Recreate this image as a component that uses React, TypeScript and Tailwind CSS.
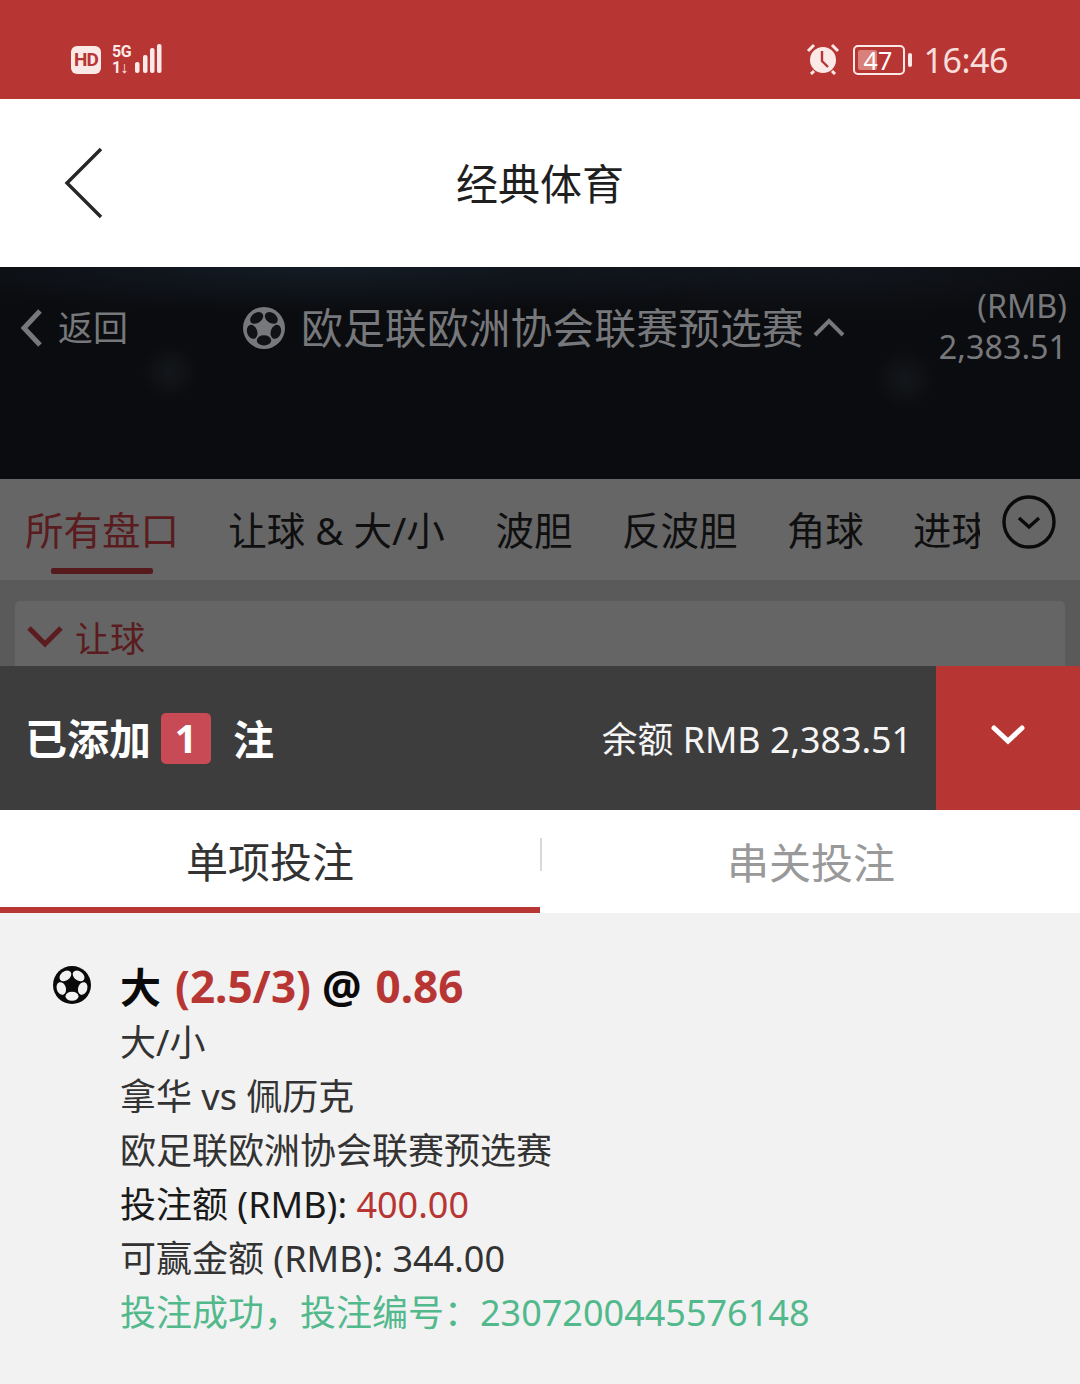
const tabs = ['波胆', '反波胆', '角球', '进球'];

function Ball({ size, disc, patch }: { size: number; disc: string; patch: string }) {
  return (
    <svg width={size} height={size} viewBox="0 0 24 24" className="shrink-0">
      <circle cx="12" cy="12" r="12" fill={disc} />
      {[36, 108, 180, 252, 324].map((a) => (
        <ellipse key={a} cx="12" cy="4.9" rx="4.1" ry="2.9" fill={patch} transform={`rotate(${a} 12 12)`} />
      ))}
    </svg>
  );
}

function StatusBar() {
  return (
    <div className="h-[99px] bg-[#b73634] flex items-center justify-between pl-[71px] pr-[72px] pt-[21px] text-[#fbe9e7]">
      <div className="flex items-center">
        <div className="w-[30px] h-[28px] rounded-[6px] bg-[#fbe9e7] text-[#b73634] text-[19px] leading-[28px] font-bold text-center tracking-[-1px] font-['Roboto',sans-serif]">
          HD
        </div>
        <div className="ml-[11px] flex flex-col w-[17px] text-[16px] leading-[16px] font-bold font-['Roboto',sans-serif]">
          <span className="tracking-[-0.5px]">5G</span>
          <span className="tracking-[-1px]">1↓</span>
        </div>
        <svg width="34" height="32" viewBox="0 0 34 32" className="-ml-[1px]" fill="#fbe9e7">
          <rect x="7" y="18" width="4.5" height="11" rx="2" />
          <rect x="15" y="11" width="4.5" height="18" rx="2" />
          <rect x="22" y="4" width="4.5" height="25" rx="2" />
          <rect x="29" y="0" width="4.5" height="29" rx="2" />
        </svg>
      </div>
      <div className="flex items-center">
        <svg width="34" height="32" viewBox="0 0 34 32" className="-mt-[2px]">
          <circle cx="17" cy="17" r="13" fill="#fbe9e7" />
          <path d="M16 8v10l6 6" stroke="#b73634" strokeWidth="2.4" fill="none" />
          <path d="M2 8l6-6M32 8l-6-6" stroke="#fbe9e7" strokeWidth="3" />
          <path d="M8 28l-3 3M26 28l3 3" stroke="#fbe9e7" strokeWidth="3" />
        </svg>
        <div className="ml-[13px] flex items-center">
          <div className="w-[52px] h-[30px] rounded-[5px] border-2 border-[#fbe9e7] p-[3px]">
            <div className="h-full w-[47%] bg-[#d9807b] rounded-[2px] whitespace-nowrap text-[25px] leading-[20px] pl-[6px] text-white font-['Noto_Sans',sans-serif]">
              47
            </div>
          </div>
          <div className="ml-[3px] w-[4px] h-[14px] rounded-[2px] bg-[#fbe9e7]" />
        </div>
        <span className="ml-[12px] text-[34px] leading-[40px] tracking-[-0.5px] text-[#f8dedb]">16:46</span>
      </div>
    </div>
  );
}

export default function App() {
  return (
    <div
      lang="zh-CN"
      className="w-[1080px] h-[1384px] overflow-hidden bg-[#f2f2f2] font-['Noto_Sans','Noto_Sans_CJK_SC',sans-serif]"
    >
      <StatusBar />

      {/* title bar */}
      <div className="h-[168px] bg-white flex items-center relative justify-center">
        <svg width="40" height="72" viewBox="0 0 40 72" className="absolute left-[64px] top-[48px]" fill="none">
          <path d="M37 2L3 36l34 34" stroke="#262626" strokeWidth="3.4" />
        </svg>
        <span className="text-[42px] leading-[50px] pt-[2px] text-[#1f1f1f]">经典体育</span>
      </div>

      {/* match header */}
      <div className="h-[212px] bg-[#0b0c0f] bg-[radial-gradient(ellipse_450px_45px_at_330px_0px,#141c26,transparent),radial-gradient(ellipse_28px_28px_at_170px_105px,#14171b,transparent),radial-gradient(ellipse_30px_30px_at_905px_112px,#14171b,transparent),radial-gradient(ellipse_350px_50px_at_800px_0px,#12161d,transparent)] flex items-start text-[#77787b]">
        <div className="flex items-center pl-[20px] pt-[40px] w-[243px]">
          <svg width="24" height="40" viewBox="0 0 24 40" fill="none">
            <path d="M20 3L4 20l16 17" stroke="#77787b" strokeWidth="5" />
          </svg>
          <span className="ml-[14px] text-[35px] leading-[42px]">返回</span>
        </div>
        <div className="flex items-center pt-[37px] w-[640px]">
          <Ball size={42} disc="#77787b" patch="#101216" />
          <span className="ml-[16px] text-[41.9px] leading-[48px] whitespace-nowrap">欧足联欧洲协会联赛预选赛</span>
          <svg width="34" height="22" viewBox="0 0 34 22" fill="none" className="ml-[8px] -mt-[2px]">
            <path d="M3 19L17 5l14 14" stroke="#77787b" strokeWidth="4" />
          </svg>
        </div>
        <div className="flex-1 pr-[13px] pt-[18px] text-right text-[32.3px] leading-[40.5px]">
          <div>(RMB)</div>
          <div>2,383.51</div>
        </div>
      </div>

      {/* market tabs */}
      <div className="h-[101px] bg-[#666667] flex relative">
        <div className="w-[980px] overflow-hidden flex gap-[49.3px] pl-[25px] pt-[28px] whitespace-nowrap text-[38.5px] leading-[46px] text-[#0f0f0f]">
          <div className="flex flex-col items-center shrink-0">
            <span className="text-[#5a1c1e]">所有盘口</span>
            <div className="mt-[15px] w-[102px] h-[6px] rounded-[2px] bg-[#571a1c]" />
          </div>
          <span className="shrink-0 h-[46px] w-[218px]">让球 &amp; 大/小</span>
          {tabs.map((t) => (
            <span key={t} className="shrink-0 h-[46px]">
              {t}
            </span>
          ))}
        </div>
        <svg width="54" height="54" viewBox="0 0 54 54" fill="none" className="absolute left-[1002px] top-[16px]">
          <circle cx="27" cy="27" r="25" stroke="#0a0a0a" strokeWidth="3.4" />
          <path d="M17 23l10 9 10-9" stroke="#0a0a0a" strokeWidth="3.4" />
        </svg>
      </div>

      {/* collapsed market */}
      <div className="h-[86px] bg-[#5a5a5b] pt-[21px] px-[15px] overflow-hidden">
        <div className="h-[80px] bg-[#656565] rounded-[5px] flex items-start pl-[12px] pt-[17px]">
          <svg width="36" height="24" viewBox="0 0 36 24" fill="none" className="mt-[7px]">
            <path d="M2 3l16 16L34 3" stroke="#5a1c1e" strokeWidth="5" />
          </svg>
          <span className="ml-[12px] text-[35px] leading-[42px] text-[#5a1c1e]">让球</span>
        </div>
      </div>

      {/* bet slip bar */}
      <div className="h-[144px] bg-[#3d3d3e] flex items-center text-white">
        <span className="ml-[25px] pt-[1px] text-[42px] leading-[50px] font-bold">已添加</span>
        <span className="ml-[10px] w-[50px] h-[51px] rounded-[5px] bg-[#c74a55] text-[39px] leading-[49px] font-bold text-center">1</span>
        <span className="ml-[22px] pt-[1px] text-[41px] leading-[50px] font-bold">注</span>
        <span className="ml-auto mr-[24px] pt-[2px] text-[35.8px] leading-[44px] text-[#f5f5f5]">余额 RMB 2,383.51</span>
        <div className="w-[144px] h-full bg-[#b73634] flex items-center justify-center pb-[6px]">
          <svg width="34" height="22" viewBox="0 0 34 22" fill="none">
            <path d="M3 4l14 13L31 4" stroke="#ffffff" strokeWidth="5" strokeLinecap="round" />
          </svg>
        </div>
      </div>

      {/* bet type tabs */}
      <div className="h-[103px] bg-white flex text-[42px] leading-[50px]">
        <div className="w-[540px] border-b-[6px] border-[#b73634] flex items-center justify-center text-[#333333] pt-[6px]">
          单项投注
        </div>
        <div className="flex-1 flex items-center justify-center text-[#999999] relative pt-[2px] pl-[2px]">
          <div className="absolute left-0 top-[28px] w-[2px] h-[33px] bg-[#d9d9d9]" />
          串关投注
        </div>
      </div>

      {/* bet detail */}
      <div className="flex items-start pl-[53px] pt-[53px]">
        <Ball size={38} disc="#0a0a0a" patch="#f2f2f2" />
        <div className="ml-[29px] -mt-[5px] text-[36px] leading-[54px] text-[#333333] whitespace-nowrap">
          <div className="text-[41px] leading-[50px] font-bold text-[#0a0a0a] mb-[4px] flex items-baseline">
            <span>大</span>
            <span className="ml-[14px] text-[44px] text-[#b73634]">(2.5/3)</span>
            <span className="ml-[11px] text-[44px]">@</span>
            <span className="ml-[14px] text-[44px] text-[#b73634]">0.86</span>
          </div>
          <div>大/小</div>
          <div>拿华 vs 佩历克</div>
          <div>欧足联欧洲协会联赛预选赛</div>
          <div className="text-[#1a1a1a]">
            投注额 (RMB): <span className="text-[#b73634]">400.00</span>
          </div>
          <div>可赢金额 (RMB): 344.00</div>
          <div className="text-[#52b98c]">投注成功，投注编号：2307200445576148</div>
        </div>
      </div>
    </div>
  );
}
